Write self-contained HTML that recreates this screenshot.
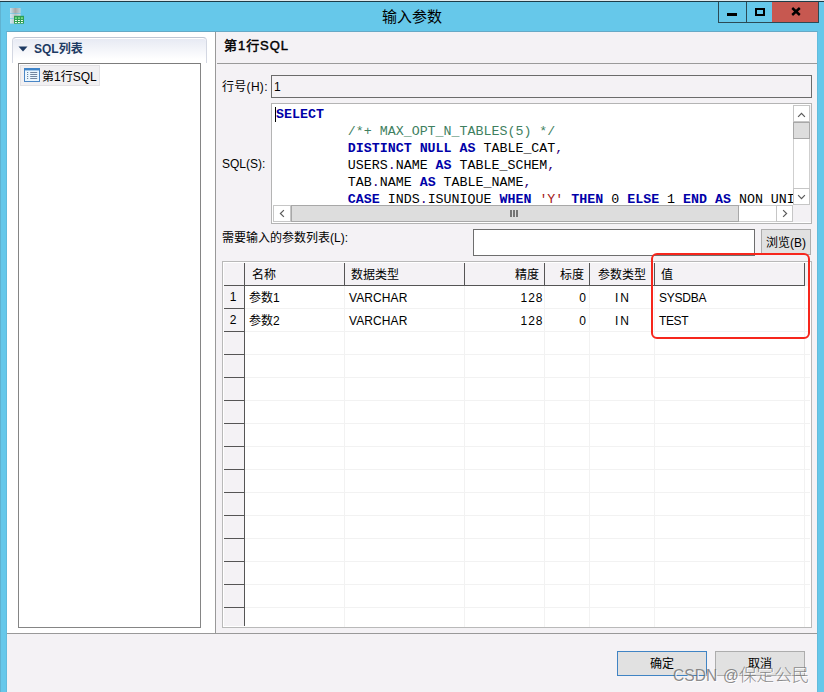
<!DOCTYPE html>
<html lang="zh-CN">
<head>
<meta charset="utf-8">
<title>输入参数</title>
<style>
*{box-sizing:border-box;margin:0;padding:0}
html,body{width:824px;height:692px;overflow:hidden;background:#66c8ea}
body{position:relative;font-family:"Liberation Sans","Noto Sans CJK SC",sans-serif;font-size:12px;color:#000}
.abs{position:absolute}
.t{position:absolute;white-space:nowrap;line-height:16px;height:16px}
#win{left:0;top:0;width:824px;height:692px;background:#66c8ea}
#topline{z-index:5;left:0;top:0;width:824px;height:2px;background:linear-gradient(#dfe8eb 0 0.8px,#1d3c48 0.8px 2px)}
#title{left:0;width:824px;top:8px;text-align:center;font-size:15px;line-height:18px;height:18px}
.cb{top:2px;height:21px;border:1px solid #2b4a55;border-top:none}
#client{left:7px;top:32px;width:810px;height:660px;background:#f4f2f5}
#leftp{left:7px;top:32px;width:208px;height:602px;background:#fff}
#sechead{left:12px;top:37px;width:195px;height:26px;border:1px solid #d3d7e2;border-top-color:#c0c6d3;border-bottom:none;border-radius:4px 4px 0 0;background:linear-gradient(#e6e9f3,#ffffff 85%);box-shadow:inset 0 1px 0 #fff}
#tree{left:18px;top:63px;width:183px;height:565px;border:1px solid #858585;border-top-color:#7c7c7c;background:#fff}
#titem{left:20px;top:65px;width:80px;height:21px;background:#f1f0f2;border:1px solid #e2e1e4}
#sash{left:215px;top:32px;width:1px;height:602px;background:#999}
#hsep{left:7px;top:633px;width:810px;height:1px;background:#999}
.field{border:1px solid #6b6b6b;background:#f4f2f5}
.btn{border:1px solid #adadad;background:#e1e1e1;text-align:center}
#sql{left:271px;top:103px;width:541px;height:121px;border:1px solid #b4b4b4;background:#fff;overflow:hidden}
.code{position:absolute;left:4px;white-space:pre;font-family:"Liberation Mono",monospace;font-size:13.3px;line-height:17px;height:17px;color:#000}
.kw{color:#0000a8;font-weight:bold}
.cm{color:#3f7f5f}
.st{color:#a31515}
.op{color:#30007a}
.sb{background:#f3f1f4}
.sbtn{background:#fff;border:1px solid #c6c6c6}
.thumb{background:#dddddd;border:1px solid #a8a8a8}
#grid{left:222px;top:261px;width:590px;height:367px;border:1px solid #b9b9b9;background:#fff;overflow:hidden}
.hd{position:absolute;top:1px;height:23px;background:#f4f2f5;border-right:1px solid #555;border-bottom:1px solid #555}
.rh{position:absolute;left:1px;width:21px;height:23px;background:#f4f2f5;border-right:1px solid #555;border-bottom:1px solid #555;text-align:center;line-height:22px;padding-right:2px}
.vl{position:absolute;top:24px;width:1px;height:342px;background:#f2f2f2}
.hl{position:absolute;left:22px;width:565px;height:1px;background:#f2f2f2}
.la{font-size:12px}
#red{left:651px;top:253px;width:159px;height:86px;border:2px solid #f6261c;border-radius:6px}
#wm{left:673px;top:662.5px;font-size:16.4px;font-weight:300;line-height:24px;height:24px;color:rgba(110,110,110,.8);text-shadow:1px 1px 0 rgba(255,255,255,.9)}
</style>
</head>
<body>
<div class="abs" id="win"></div>
<div class="abs" id="topline"></div>
<div class="abs" style="left:0;top:2px;width:1px;height:690px;background:#60b2d0"></div>

<!-- title bar icon -->
<svg class="abs" style="left:9px;top:7px" width="16" height="18" viewBox="0 0 16 18">
  <defs>
    <linearGradient id="cg1" x1="0" x2="1" y1="0" y2="0"><stop offset="0" stop-color="#c4e3f0"/><stop offset=".5" stop-color="#a9a9a9"/><stop offset="1" stop-color="#bcd3dc"/></linearGradient>
    <linearGradient id="cg2" x1="0" x2="1" y1="0" y2="0"><stop offset="0" stop-color="#cfeaf5"/><stop offset=".5" stop-color="#bcc2c4"/><stop offset="1" stop-color="#c8dde6"/></linearGradient>
  </defs>
  <rect x="1" y="1" width="10.6" height="5.4" fill="url(#cg1)"/>
  <rect x="1" y="7" width="10.6" height="4.4" fill="url(#cg2)"/>
  <rect x="1" y="12" width="10.6" height="4.6" fill="url(#cg2)"/>
  <rect x="5" y="8.8" width="10" height="7.9" fill="#2f9e55"/>
  <g fill="#7fe78b"><rect x="6" y="10.3" width="1.9" height="1.6"/><rect x="9" y="10.3" width="1.9" height="1.6"/><rect x="12" y="10.3" width="1.9" height="1.6"/></g>
  <g fill="#f4fff4"><rect x="6" y="13" width="1.9" height="1"/><rect x="9" y="13" width="1.9" height="1"/><rect x="12" y="13" width="1.9" height="1"/>
  <rect x="6" y="15" width="1.9" height="1"/><rect x="9" y="15" width="1.9" height="1"/><rect x="12" y="15" width="1.9" height="1"/></g>
</svg>

<div class="t" id="title">输入参数</div>

<!-- caption buttons -->
<div class="abs cb" style="left:718px;width:29px;background:#66c8ea"></div>
<div class="abs cb" style="left:746px;width:27px;background:#66c8ea"></div>
<div class="abs cb" style="left:772px;width:47px;background:#c75850;border-left:none"></div>
<div class="abs" style="left:727px;top:13px;width:10px;height:3px;background:#000"></div>
<div class="abs" style="left:755px;top:8px;width:10px;height:8px;border:2px solid #000"></div>
<svg class="abs" style="left:791px;top:7px" width="10" height="9" viewBox="0 0 10 9"><path d="M1.2 1 L8.8 8 M8.8 1 L1.2 8" stroke="#000" stroke-width="2.4" fill="none"/></svg>

<div class="abs" id="client"></div>
<div class="abs" style="left:6px;top:31px;width:812px;height:661px;border:1px solid #62bbdc;border-top-color:#66a9c6;border-bottom:none"></div>

<!-- left panel -->
<div class="abs" id="leftp"></div>
<div class="abs" id="sechead"></div>
<svg class="abs" style="left:18px;top:46px" width="10" height="6" viewBox="0 0 10 6"><path d="M0.5 0.5 H9.5 L5 5.5 Z" fill="#1d3a63"/></svg>
<div class="t" style="left:34px;top:41px;font-weight:bold;color:#1d3a63;font-size:12px">SQL列表</div>
<div class="abs" id="tree"></div>
<div class="abs" id="titem"></div>
<svg class="abs" style="left:24px;top:68px" width="16" height="14" viewBox="0 0 16 14">
  <rect x="0.5" y="0.5" width="15" height="13" fill="#eaf6fe" stroke="#4a86c6"/>
  <rect x="0" y="0" width="16" height="2.4" fill="#3f84c8"/>
  <g fill="#6d86a4"><rect x="3" y="4" width="1.2" height="1"/><rect x="3" y="6" width="1.2" height="1"/><rect x="3" y="8" width="1.2" height="1"/><rect x="3" y="10" width="1.2" height="1"/></g>
  <g fill="#72859e"><rect x="6.2" y="4" width="7" height="1"/><rect x="6.2" y="6" width="7" height="1"/><rect x="6.2" y="8" width="7" height="1"/><rect x="6.2" y="10" width="7" height="1"/></g>
</svg>
<div class="t" style="left:42px;top:69px">第1行SQL</div>

<div class="abs" id="sash"></div>
<div class="abs" id="hsep"></div>

<!-- right panel header -->
<div class="t" style="left:224px;top:37px;font-weight:normal;-webkit-text-stroke:.45px #000;font-size:13px;letter-spacing:.95px;line-height:18px;height:18px">第1行SQL</div>
<div class="abs" style="left:217px;top:63px;width:600px;height:1px;background:#9a9a9a"></div>

<div class="t" style="left:222px;top:79px;letter-spacing:.3px">行号(H):</div>
<div class="abs field" style="left:271px;top:75px;width:541px;height:23px"></div>
<div class="t" style="left:274px;top:79px">1</div>

<div class="t" style="left:222px;top:156px">SQL(S):</div>
<div class="abs" id="sql">
  <div class="abs" style="left:3px;top:3px;width:1px;height:15px;background:#000"></div>
  <div class="code" style="top:2px"><span class="kw">SELECT</span></div>
  <div class="code" style="top:19px">         <span class="cm">/*+ MAX_OPT_N_TABLES(5) */</span></div>
  <div class="code" style="top:36px">         <span class="kw">DISTINCT NULL AS</span> TABLE_CAT<span class="op">,</span></div>
  <div class="code" style="top:53px">         USERS<span class="op">.</span>NAME <span class="kw">AS</span> TABLE_SCHEM<span class="op">,</span></div>
  <div class="code" style="top:70px">         TAB<span class="op">.</span>NAME <span class="kw">AS</span> TABLE_NAME<span class="op">,</span></div>
  <div class="code" style="top:87px;height:13px;overflow:hidden">         <span class="kw">CASE</span> INDS<span class="op">.</span>ISUNIQUE <span class="kw">WHEN</span> <span class="st">'Y'</span> <span class="kw">THEN</span> 0 <span class="kw">ELSE</span> 1 <span class="kw">END AS</span> NON_UNIQUE</div>
  <!-- vertical scrollbar -->
  <div class="abs sb" style="left:521px;top:1px;width:18px;height:117px"></div>
  <div class="abs" style="left:521px;top:1px;width:17px;height:100px;background:#fff;border-left:1px solid #cfcfcf;border-right:1px solid #cfcfcf"></div>
  <div class="abs sbtn" style="left:521px;top:1px;width:17px;height:17px"></div>
  <div class="abs thumb" style="left:521px;top:18px;width:17px;height:17px"></div>
  <div class="abs sbtn" style="left:521px;top:84px;width:17px;height:17px"></div>
  <svg class="abs" style="left:525px;top:7.5px" width="9" height="6" viewBox="0 0 9 6"><path d="M1.1 4.9 L4.5 1.4 L7.9 4.9" stroke="#5a5a5a" stroke-width="1.2" fill="none"/></svg>
  <svg class="abs" style="left:525px;top:90px" width="9" height="6" viewBox="0 0 9 6"><path d="M1.1 1.1 L4.5 4.6 L7.9 1.1" stroke="#5a5a5a" stroke-width="1.2" fill="none"/></svg>
  <!-- horizontal scrollbar -->
  <div class="abs" style="left:1px;top:101px;width:520px;height:17px;background:#fff;border-top:1px solid #cfcfcf;border-bottom:1px solid #cfcfcf"></div>
  <div class="abs sbtn" style="left:1px;top:101px;width:18px;height:17px"></div>
  <div class="abs thumb" style="left:19px;top:101px;width:448px;height:17px"></div>
  <div class="abs sbtn" style="left:504px;top:101px;width:17px;height:17px"></div>
  <svg class="abs" style="left:7px;top:105px" width="6" height="9" viewBox="0 0 6 9"><path d="M4.9 1.1 L1.4 4.5 L4.9 7.9" stroke="#5a5a5a" stroke-width="1.2" fill="none"/></svg>
  <svg class="abs" style="left:510px;top:105px" width="6" height="9" viewBox="0 0 6 9"><path d="M1.1 1.1 L4.6 4.5 L1.1 7.9" stroke="#5a5a5a" stroke-width="1.2" fill="none"/></svg>
  <div class="abs" style="left:238px;top:106px;width:8px;height:7px;background:repeating-linear-gradient(90deg,#757575 0 1.8px,transparent 1.8px 3.1px)"></div>
</div>

<div class="t" style="left:222px;top:230px">需要输入的参数列表(L):</div>
<div class="abs" style="left:473px;top:229px;width:282px;height:27px;border:1px solid #6e6e6e;background:#fff"></div>
<div class="abs btn" style="left:761px;top:229px;width:50px;height:26px"></div>
<div class="t" style="left:761px;top:235px;width:50px;text-align:center">浏览(B)</div>

<!-- grid -->
<div class="abs" id="grid">
  <div class="hd" style="left:1px;width:21px"></div>
  <div class="hd" style="left:22px;width:100px"></div>
  <div class="hd" style="left:122px;width:120px"></div>
  <div class="hd" style="left:242px;width:80px"></div>
  <div class="hd" style="left:322px;width:45px"></div>
  <div class="hd" style="left:367px;width:65px"></div>
  <div class="hd" style="left:432px;width:150px"></div>
  <div class="abs" style="left:582px;top:1px;width:5px;height:23px;background:#f4f2f5"></div>
  <div class="vl" style="left:121px"></div>
  <div class="vl" style="left:241px"></div>
  <div class="vl" style="left:321px"></div>
  <div class="vl" style="left:366px"></div>
  <div class="vl" style="left:431px"></div>
  <div class="vl" style="left:581px"></div>
  <div class="hl" style="top:46px"></div><div class="hl" style="top:69px"></div><div class="hl" style="top:92px"></div><div class="hl" style="top:115px"></div><div class="hl" style="top:138px"></div><div class="hl" style="top:161px"></div><div class="hl" style="top:184px"></div><div class="hl" style="top:207px"></div><div class="hl" style="top:230px"></div><div class="hl" style="top:253px"></div><div class="hl" style="top:276px"></div><div class="hl" style="top:299px"></div><div class="hl" style="top:322px"></div><div class="hl" style="top:345px"></div><div class="hl" style="top:368px"></div>
  <div class="rh" style="top:24px">1</div><div class="rh" style="top:47px">2</div><div class="rh" style="top:70px"></div><div class="rh" style="top:93px"></div><div class="rh" style="top:116px"></div><div class="rh" style="top:139px"></div><div class="rh" style="top:162px"></div><div class="rh" style="top:185px"></div><div class="rh" style="top:208px"></div><div class="rh" style="top:231px"></div><div class="rh" style="top:254px"></div><div class="rh" style="top:277px"></div><div class="rh" style="top:300px"></div><div class="rh" style="top:323px"></div><div class="rh" style="top:346px;border-bottom:none;height:18px"></div>

  <div class="t" style="left:29px;top:5px">名称</div>
  <div class="t" style="left:128px;top:5px">数据类型</div>
  <div class="t" style="left:242px;top:5px;width:74px;text-align:right">精度</div>
  <div class="t" style="left:322px;top:5px;width:39px;text-align:right">标度</div>
  <div class="t" style="left:367px;top:5px;width:64px;text-align:center">参数类型</div>
  <div class="t" style="left:438px;top:5px">值</div>

  <div class="t" style="left:26px;top:28px">参数1</div>
  <div class="t la" style="left:126px;top:28px;letter-spacing:.1px">VARCHAR</div>
  <div class="t la" style="left:242px;top:28px;width:78.5px;text-align:right;letter-spacing:1px">128</div>
  <div class="t la" style="left:322px;top:28px;width:41px;text-align:right">0</div>
  <div class="t la" style="left:367px;top:28px;width:66px;text-align:center;letter-spacing:2px">IN</div>
  <div class="t la" style="left:436px;top:28px;letter-spacing:-.25px">SYSDBA</div>

  <div class="t" style="left:26px;top:51px">参数2</div>
  <div class="t la" style="left:126px;top:51px;letter-spacing:.1px">VARCHAR</div>
  <div class="t la" style="left:242px;top:51px;width:78.5px;text-align:right;letter-spacing:1px">128</div>
  <div class="t la" style="left:322px;top:51px;width:41px;text-align:right">0</div>
  <div class="t la" style="left:367px;top:51px;width:66px;text-align:center;letter-spacing:2px">IN</div>
  <div class="t la" style="left:436px;top:51px;letter-spacing:-.4px">TEST</div>
</div>
<div class="abs" id="red"></div>

<!-- bottom buttons -->
<div class="abs btn" style="left:617px;top:651px;width:90px;height:25px;border-color:#4084c4"></div>
<div class="t" style="left:617px;top:656px;width:90px;text-align:center">确定</div>
<div class="abs btn" style="left:715px;top:651px;width:90px;height:25px"></div>
<div class="t" style="left:715px;top:656px;width:90px;text-align:center">取消</div>

<div class="t" id="wm"><span style="font-size:15.6px;word-spacing:1.6px">CSDN @</span><span style="font-size:17.6px">保定公民</span></div>
</body>
</html>
